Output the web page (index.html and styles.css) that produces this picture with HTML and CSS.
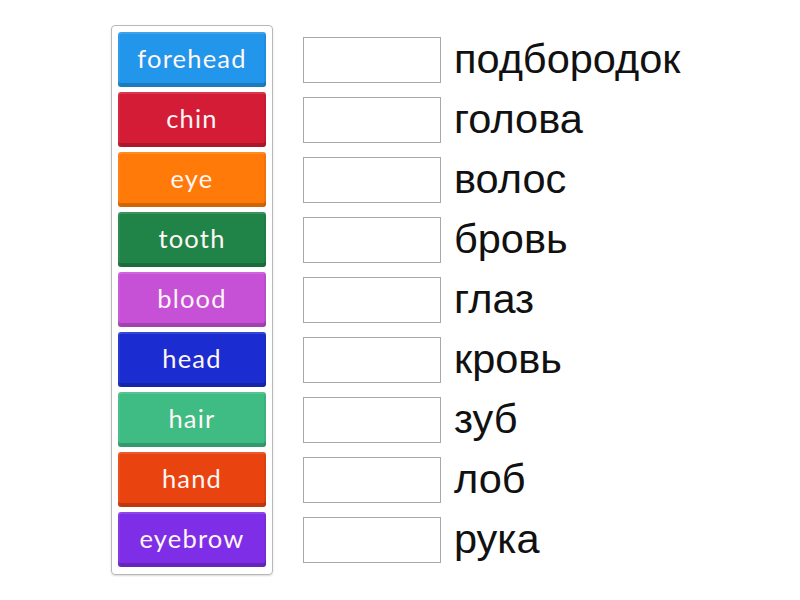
FILE: index.html
```html
<!DOCTYPE html>
<html>
<head>
<meta charset="utf-8">
<link rel="stylesheet" href="styles.css">
</head>
<body>
<div class="page">
  <div class="bank">
    <div class="tile t1">forehead</div>
    <div class="tile t2">chin</div>
    <div class="tile t3">eye</div>
    <div class="tile t4">tooth</div>
    <div class="tile t5">blood</div>
    <div class="tile t6">head</div>
    <div class="tile t7">hair</div>
    <div class="tile t8">hand</div>
    <div class="tile t9">eyebrow</div>
  </div>
  <div class="answers">
    <div class="row"><div class="slot"></div><span class="word">подбородок</span></div>
    <div class="row"><div class="slot"></div><span class="word">голова</span></div>
    <div class="row"><div class="slot"></div><span class="word">волос</span></div>
    <div class="row"><div class="slot"></div><span class="word">бровь</span></div>
    <div class="row"><div class="slot"></div><span class="word">глаз</span></div>
    <div class="row"><div class="slot"></div><span class="word">кровь</span></div>
    <div class="row"><div class="slot"></div><span class="word">зуб</span></div>
    <div class="row"><div class="slot"></div><span class="word">лоб</span></div>
    <div class="row"><div class="slot"></div><span class="word">рука</span></div>
  </div>
</div>
</body>
</html>
```
FILE: styles.css
```css
html, body {
  margin: 0;
  padding: 0;
  background: #fff;
}
.page {
  display: flex;
  align-items: flex-start;
  padding: 25px 0 0 111px;
}
.bank {
  box-sizing: border-box;
  width: 162px;
  height: 550px;
  border: 1px solid #b8b8b8;
  border-radius: 4px;
  padding: 6px;
  display: flex;
  flex-direction: column;
  gap: 5px;
  box-shadow: 0 1px 2px rgba(0,0,0,0.15);
}
.tile {
  height: 55px;
  width: 148px;
  box-sizing: border-box;
  border-radius: 3px;
  display: flex;
  align-items: center;
  justify-content: center;
  font-family: Lato, "Open Sans", sans-serif;
  font-size: 25.5px;
  letter-spacing: 1.2px;
  color: #fff6f6;
  padding-bottom: 3px;
  box-shadow: inset 0 -4px 0 rgba(0,0,0,0.18), inset 0 2px 0 rgba(255,255,255,0.12), inset 2px 0 0 rgba(255,255,255,0.06), inset -2px 0 0 rgba(0,0,0,0.05);
}
.t1 { background: #2196ea; }
.t2 { background: #d41c36; }
.t3 { background: #ff7a08; }
.t4 { background: #208448; }
.t5 { background: #c651d6; }
.t6 { background: #1b2dd0; }
.t7 { background: #3ebc84; }
.t8 { background: #e94410; }
.t9 { background: #7e2ee6; }
.answers {
  display: flex;
  flex-direction: column;
  margin-left: 30px;
  padding-top: 12px;
}
.row {
  height: 60px;
  display: flex;
  align-items: flex-start;
}
.slot {
  box-sizing: border-box;
  width: 138px;
  height: 46px;
  border: 1px solid #a8a8a8;
  background: #fff;
}
.word {
  margin-left: 13px;
  font-family: "Liberation Sans", Arial, sans-serif;
  font-size: 41.5px;
  line-height: 44px;
  color: #111;
}
```
